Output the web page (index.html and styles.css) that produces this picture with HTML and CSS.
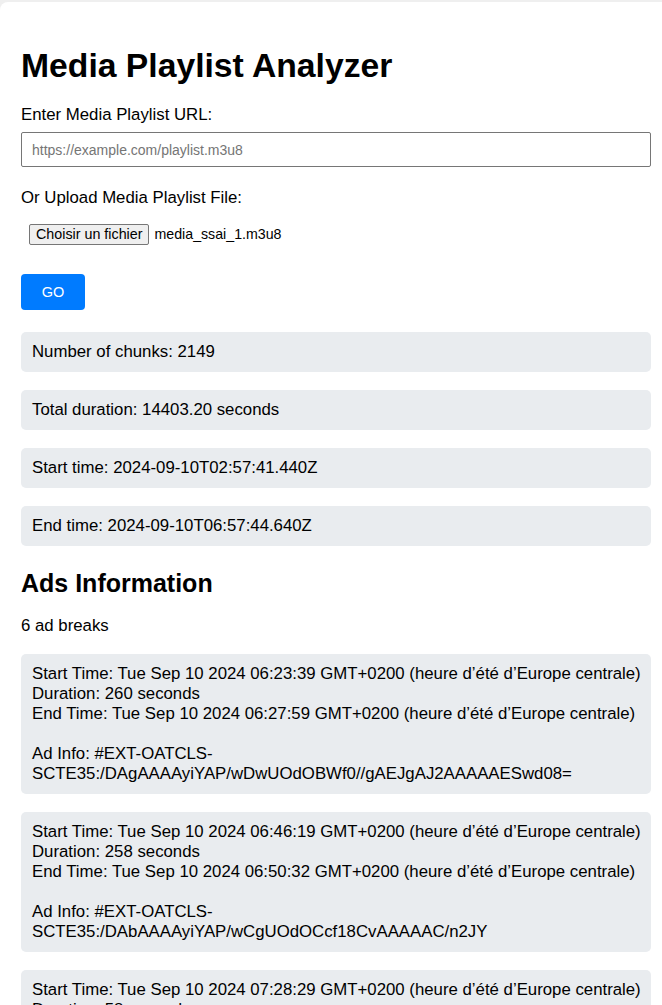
FILE: index.html
```html
<!DOCTYPE html>
<html lang="en">
<head>
<meta charset="utf-8">
<title>Media Playlist Analyzer</title>
<link rel="stylesheet" href="styles.css">
</head>
<body>
<div class="container">
  <h1 class="title">Media Playlist Analyzer</h1>
  <label class="field-label" for="url">Enter Media Playlist URL:</label>
  <input class="url-input" id="url" type="text" placeholder="https://example.com/playlist.m3u8">
  <div class="field-label upload-label">Or Upload Media Playlist File:</div>
  <div class="file-row">
    <button class="file-btn" type="button">Choisir un fichier</button>
    <span class="file-name">media_ssai_1.m3u8</span>
  </div>
  <button class="go-btn" type="button">GO</button>

  <div class="results">
    <div class="result-box">Number of chunks: 2149</div>
    <div class="result-box">Total duration: 14403.20 seconds</div>
    <div class="result-box">Start time: 2024-09-10T02:57:41.440Z</div>
    <div class="result-box">End time: 2024-09-10T06:57:44.640Z</div>
  </div>

  <h2 class="section-title">Ads Information</h2>
  <p class="ad-count">6 ad breaks</p>

  <div class="result-box ad-box">
    <div class="line">Start Time: Tue Sep 10 2024 06:23:39 GMT+0200 (heure d’été d’Europe centrale)</div>
    <div class="line">Duration: 260 seconds</div>
    <div class="line">End Time: Tue Sep 10 2024 06:27:59 GMT+0200 (heure d’été d’Europe centrale)</div>
    <div class="blank"></div>
    <div class="wrap">Ad Info: #EXT-OATCLS-SCTE35:/DAgAAAAyiYAP/wDwUOdOBWf0//gAEJgAJ2AAAAAESwd08=</div>
  </div>
  <div class="result-box ad-box">
    <div class="line">Start Time: Tue Sep 10 2024 06:46:19 GMT+0200 (heure d’été d’Europe centrale)</div>
    <div class="line">Duration: 258 seconds</div>
    <div class="line">End Time: Tue Sep 10 2024 06:50:32 GMT+0200 (heure d’été d’Europe centrale)</div>
    <div class="blank"></div>
    <div class="wrap">Ad Info: #EXT-OATCLS-SCTE35:/DAbAAAAyiYAP/wCgUOdOCcf18CvAAAAAC/n2JY</div>
  </div>
  <div class="result-box ad-box">
    <div class="line">Start Time: Tue Sep 10 2024 07:28:29 GMT+0200 (heure d’été d’Europe centrale)</div>
    <div class="line">Duration: 58 seconds</div>
    <div class="line">End Time: Tue Sep 10 2024 07:29:27 GMT+0200 (heure d’été d’Europe centrale)</div>
    <div class="blank"></div>
    <div class="wrap">Ad Info: #EXT-OATCLS-SCTE35:/DAbAAAAyiYAP/wCgUOdOCcf18CvAAAAAC/n2JY</div>
  </div>
</div>
</body>
</html>
```

FILE: styles.css
```css
html, body {
  margin: 0;
  padding: 0;
  overflow-x: hidden;
}

body {
  background: #efefef;
  font-family: "Liberation Sans", Arial, sans-serif;
  font-size: 16.8px;
  line-height: 20px;
  color: #000;
}

.container {
  margin-top: 2px;
  background: #fff;
  border-top-left-radius: 8px;
  padding: 20px 11px 20px 21px;
}

.title {
  font-size: 33.7px;
  line-height: 38px;
  font-weight: bold;
  margin: 24px 0 21px;
}

.field-label {
  display: block;
  margin: 0 0 7px;
}

.url-input {
  display: block;
  box-sizing: border-box;
  width: 100%;
  height: 35px;
  margin: 0 0 21px;
  padding: 0 10px;
  border: 1px solid #767676;
  border-radius: 2px;
  font-family: "Liberation Sans", Arial, sans-serif;
  font-size: 14px;
  color: #000;
  background: #fff;
}

.url-input::placeholder {
  color: #757575;
}

.upload-label {
  margin-bottom: 8px;
}

.file-row {
  display: flex;
  align-items: center;
  gap: 5px;
  padding: 8px;
}

.file-btn {
  box-sizing: border-box;
  height: 21px;
  padding: 0 6px;
  border: 1px solid #767676;
  border-radius: 2px;
  background: #efefef;
  font-family: "Liberation Sans", Arial, sans-serif;
  font-size: 14.3px;
  color: #000;
  line-height: 19px;
}

.file-name {
  font-size: 14.2px;
  line-height: 21px;
}

.go-btn {
  display: block;
  margin-top: 21px;
  box-sizing: border-box;
  width: 64px;
  height: 36px;
  padding: 0;
  border: none;
  border-radius: 4px;
  background: #007bff;
  color: #fff;
  font-family: "Liberation Sans", Arial, sans-serif;
  font-size: 14.5px;
}

.results {
  margin-top: 22px;
}

.result-box {
  background: #e9ecef;
  border-radius: 5px;
  padding: 10px 11px;
  margin-bottom: 18px;
}

.section-title {
  font-size: 25px;
  line-height: 29px;
  font-weight: bold;
  margin: 23px 0 18px;
}

.ad-count {
  margin: 0 0 18px;
}

.ad-box .line {
  white-space: nowrap;
}

.ad-box .blank {
  height: 20px;
}
```
